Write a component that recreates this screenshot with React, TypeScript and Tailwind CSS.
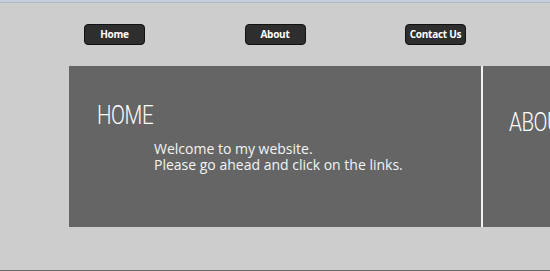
export default function App() {
  const navItems = ['Home', 'About', 'Contact Us'];

  return (
    <div className="h-[271px] w-[550px] overflow-hidden bg-[#cdcdcd] font-['Open_Sans',sans-serif] flex flex-col">
      {/* browser chrome remnant */}
      <div className="h-[3px] bg-[#c6ceda] border-b border-[#aeb8c6]" />

      {/* nav */}
      <nav className="flex gap-[99.5px] pl-[84px] pt-[21px]">
        {navItems.map((item) => (
          <a
            key={item}
            href="#"
            className="w-[61px] h-[21px] flex items-center justify-center rounded-[4px] border border-[#111] bg-[#2e2e2e] text-white text-[10px] font-bold tracking-tight"
          >
            {item}
          </a>
        ))}
      </nav>

      {/* panels */}
      <div className="mt-[21px] ml-[69px] flex h-[161px]">
        <section className="w-[414px] shrink-0 bg-[#656565] border-r-2 border-[#f2f2f2] pl-[28px] pt-[37px]">
          <h1 className="text-white text-[25px] leading-[25px] font-light font-['Roboto',sans-serif] tracking-[-0.5px] scale-x-[0.82] origin-left">
            HOME
          </h1>
          <p className="mt-[13px] ml-[57px] text-[#f4f4f4] text-[14px] leading-[16px] font-medium">
            Welcome to my website.
            <br />
            Please go ahead and click on the links.
          </p>
        </section>
        <section className="w-[300px] shrink-0 bg-[#656565] pl-[26px] pt-[44px]">
          <h2 className="text-white text-[25px] leading-[25px] font-light font-['Roboto',sans-serif] tracking-[-0.5px] scale-x-[0.82] origin-left">
            ABOUT
          </h2>
        </section>
      </div>

      <div className="mt-auto h-px bg-[#6a6a6a]" />
    </div>
  );
}
